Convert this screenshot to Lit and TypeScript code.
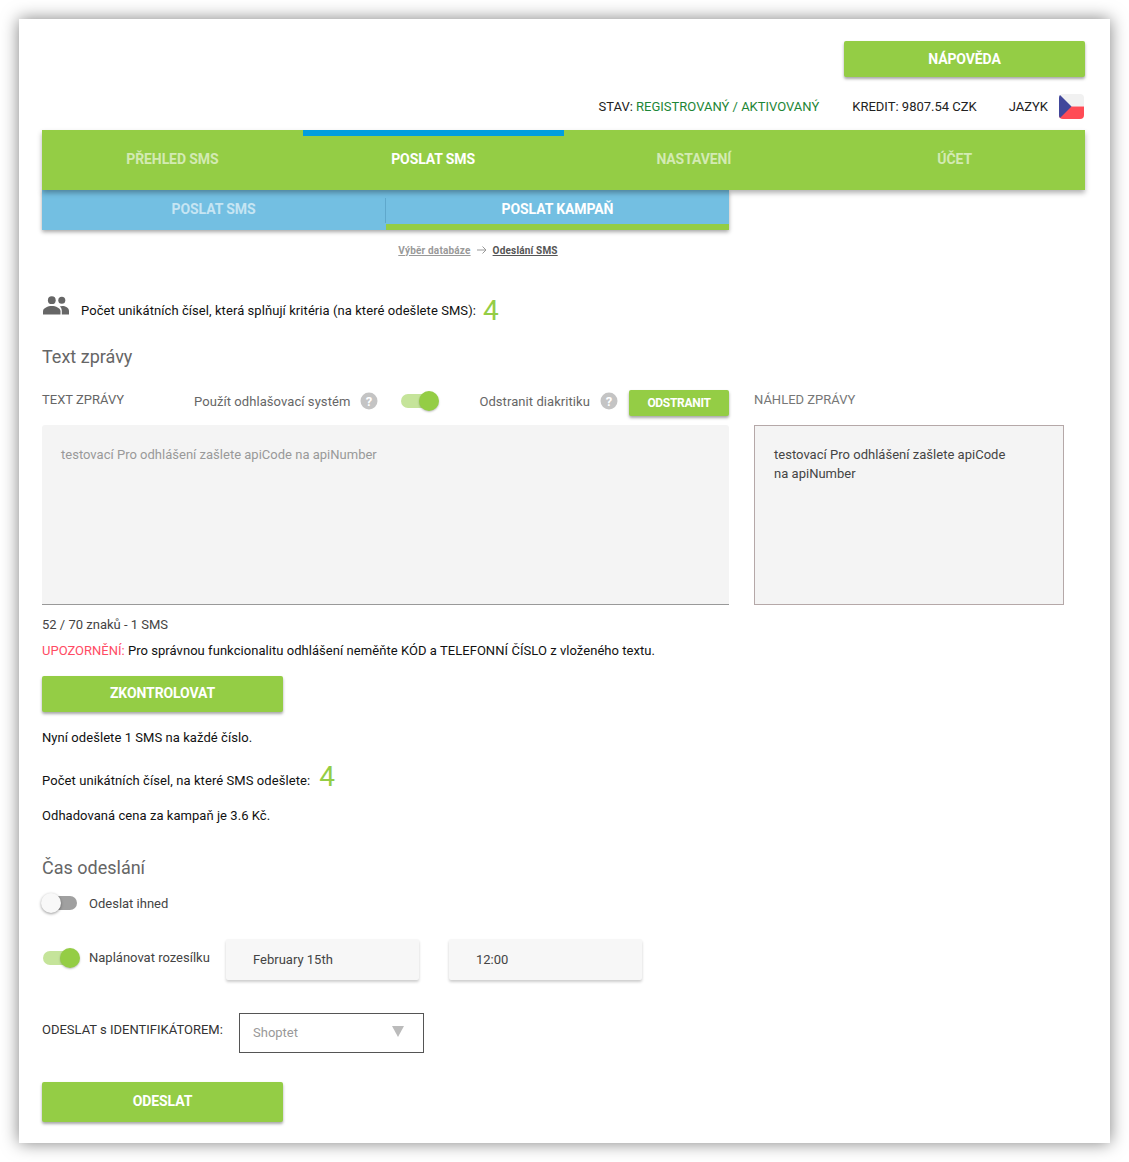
import { LitElement, html, css } from "lit";
import { customElement } from "lit/decorators.js";

const help = html`<svg class="help" viewBox="0 0 18 18" width="18" height="18"><circle cx="9" cy="9" r="8.5" fill="#c4c4c4"/><text x="9" y="13.6" text-anchor="middle" font-family="Roboto" font-weight="700" font-size="13" fill="#fff">?</text></svg>`;

@customElement("app-root")
export class AppRoot extends LitElement {
  static styles = css`
    :host { display: block; font-family: Roboto, "Liberation Sans", sans-serif; font-size: 13px; color: #222; background: #fff; }
    * { box-sizing: border-box; }
    .page { padding: 19px; height: 1162px; }
    .card { width: 1091px; height: 1124px; background: #fff; box-shadow: 0 0 16px rgba(0,0,0,.5); padding: 22px 25px 0 23px; }
    .btn { display: flex; align-items: center; justify-content: center; background: #94cd45; color: #fff; font-weight: 700; border-radius: 2px; box-shadow: 0 2px 3px rgba(0,0,0,.35); font-size: 14px; letter-spacing: -.1px; }
    .top { display: flex; justify-content: flex-end; }
    .help-btn { width: 241px; height: 36px; padding-bottom: 1px; }
    .status { display: flex; justify-content: flex-end; align-items: center; height: 25px; margin-top: 17px; margin-bottom: 11px; color: #222; font-size: 13px; }
    .status .reg { color: #1d8636; }
    .status .s { margin-right: 33px; }
    .status .k { margin-right: 32px; }
    .flag { margin-left: 11px; margin-right: 1px; width: 25px; height: 25px; border-radius: 4px; display: block; }
    .nav { display: grid; grid-template-columns: repeat(4, 1fr); height: 60px; background: #94cd45; box-shadow: 0 3px 5px rgba(0,0,0,.3); position: relative; z-index: 2; }
    .nav div { display: flex; align-items: center; justify-content: center; color: rgba(255,255,255,.6); font-weight: 700; font-size: 14px; letter-spacing: -.1px; border-top: 6px solid transparent; padding-bottom: 8px; }
    .nav div.on { color: #fff; border-top-color: #009ee0; }
    .sub { display: grid; grid-template-columns: 343px 1px 343px; width: 687px; height: 40px; background: #73bfe2; box-shadow: 0 2px 4px rgba(0,0,0,.35); }
    .sub .t { display: flex; align-items: center; justify-content: center; color: rgba(255,255,255,.6); font-weight: 700; font-size: 14px; letter-spacing: -.1px; border-bottom: 6px solid transparent; padding-top: 4px; }
    .sub .t.on { color: #fff; border-bottom-color: #94cd45; }
    .sep { background: #5fa8cc; margin: 8px 0 7px; }
    .crumb { width: 872px; margin-top: 13px; height: 14px; display: flex; justify-content: center; align-items: center; gap: 6px; font-size: 10px; font-weight: 700; color: #999; letter-spacing: .18px; }
    .crumb u:last-child { color: #555; }
    .count { display: flex; align-items: flex-start; margin-top: 39px; height: 38px; }
    .count svg { margin-left: 1px; display: block; }
    .count .lbl { margin-left: 12px; margin-top: 7px; color: #111; letter-spacing: .07px; }
    .big { color: #94cd45; font-size: 28px; font-weight: 400; line-height: 30px; margin-left: 7px; }
    h2 { margin: 0; font-weight: 400; font-size: 18px; color: #666; line-height: 24px; }
    .t1 { margin-top: 11px; }
    .cols { display: grid; grid-template-columns: 687px 310px; gap: 25px; margin-top: 21px; }
    .ctrl { display: flex; align-items: center; height: 26px; padding-bottom: 4px; color: #666; letter-spacing: .07px; }
    .ctrl .l { width: 152px; font-size: 13px; letter-spacing: 0; margin-top: -4px; }
    .help { display: block; }
    .mh { margin-left: 10px; }
    .sw { width: 38px; height: 20px; position: relative; flex: none; }
    .sw::before { content: ""; position: absolute; left: 0; right: 2px; top: 3px; height: 14px; border-radius: 7px; background: #c5e49a; }
    .sw::after { content: ""; position: absolute; right: 0; top: 0; width: 20px; height: 20px; border-radius: 50%; background: #94cd45; box-shadow: 0 1px 2px rgba(0,0,0,.25); }
    .sw.off::before { background: #a0a0a0; left: 2px; right: 0; }
    .sw.off::after { left: 0; right: auto; background: #f8f8f8; box-shadow: 0 1px 3px rgba(0,0,0,.4); }
    .sw1 { margin-left: 23px; }
    .od { margin-left: 40px; }
    .rm { width: 100px; height: 26px; font-size: 12px; margin-left: auto; letter-spacing: -.3px; align-self: flex-start; flex: none; }
    .ta { margin-top: 9px; height: 180px; background: #f4f4f4; border-bottom: 1px solid #999; border-radius: 3px 3px 0 0; padding: 21px 19px; color: #999; line-height: 18px; letter-spacing: .01px; }
    .pl { color: #777; font-size: 13px; height: 26px; line-height: 14px; padding-top: 3px; }
    .pv { margin-top: 9px; height: 180px; background: #f4f4f4; border: 1px solid #b5a8a8; padding: 19px; color: #444; line-height: 19px; letter-spacing: .02px; }
    .line { line-height: 16px; }
    .cnt { margin-top: 12px; color: #444; }
    .warn { margin-top: 10px; color: #111; letter-spacing: .05px; }
    .warn b { font-weight: 400; color: #ff4b64; letter-spacing: 0; }
    .chk { width: 241px; height: 36px; margin-top: 17px; padding-bottom: 2px; }
    .now { margin-top: 18px; color: #111; letter-spacing: .06px; }
    .uniq { display: flex; align-items: flex-end; margin-top: 11px; height: 34px; }
    .uniq .lbl { line-height: 16px; margin-bottom: 2px; color: #111; letter-spacing: .08px; }
    .uniq .big { margin-left: 9px; margin-bottom: -1px; }
    .est { margin-top: 17px; color: #111; letter-spacing: .05px; }
    .t2 { margin-top: 32px; }
    .opt { display: flex; align-items: center; color: #444; }
    .o1 { margin-top: 11px; height: 24px; margin-left: -1px; }
    .o1 .sw { width: 36px; }
    .o1 span:last-child { margin-left: 12px; }
    .o2 { margin-top: 24px; height: 41px; margin-left: 1px; }
    .o2 .sw { width: 37px; margin-top: -3px; }
    .o2 span:nth-child(2) { margin-left: 9px; margin-top: -4px; width: 122px; flex: none; }
    .fld { width: 193px; height: 41px; background: #f7f7f7; box-shadow: 0 2px 3px rgba(0,0,0,.2); display: flex; align-items: center; padding-left: 27px; margin-left: 15px; color: #444; border-radius: 2px; }
    .fld + .fld { margin-left: 30px; }
    .sel-row { display: flex; align-items: flex-start; margin-top: 33px; height: 40px; }
    .sel-row .lbl { width: 197px; padding-top: 9px; font-size: 13px; line-height: 16px; color: #333; }
    .sel { width: 185px; height: 40px; border: 1px solid #555; display: flex; align-items: center; justify-content: space-between; padding: 0 19px 1px 13px; color: #999; }
    .tri { width: 0; height: 0; border-left: 6px solid transparent; border-right: 6px solid transparent; border-top: 11px solid #bbb; margin-top: -2px; }
    .send { width: 241px; height: 40px; margin-top: 29px; padding-bottom: 3px; }
  `;

  render() {
    return html`<div class="page"><div class="card">
      <div class="top"><div class="btn help-btn">NÁPOVĚDA</div></div>
      <div class="status">
        <span class="s">STAV: <span class="reg">REGISTROVANÝ / AKTIVOVANÝ</span></span>
        <span class="k">KREDIT: 9807.54 CZK</span>
        <span>JAZYK</span>
        <svg class="flag" viewBox="0 0 25 25"><rect width="25" height="12.5" fill="#f1f1f1"/><rect y="12.5" width="25" height="12.5" fill="#ff4b55"/><path d="M0 0 L12.5 12.5 L0 25Z" fill="#41479b"/></svg>
      </div>
      <div class="nav"><div>PŘEHLED SMS</div><div class="on">POSLAT SMS</div><div>NASTAVENÍ</div><div>ÚČET</div></div>
      <div class="sub"><div class="t">POSLAT SMS</div><div class="sep"></div><div class="t on">POSLAT KAMPAŇ</div></div>
      <div class="crumb"><u>Výběr databáze</u>
        <svg width="10" height="10" viewBox="0 0 10 10"><path d="M0 5H9M5.500 1.500L9 5L5.500 8.500" fill="none" stroke="#999" stroke-width="1"/></svg>
        <u>Odeslání SMS</u></div>
      <div class="count">
        <svg width="26" height="19" viewBox="0 0 26 19"><circle cx="8.800" cy="4.200" r="3.900" fill="#666"/><circle cx="18.800" cy="4.200" r="3.500" fill="#666"/><path d="M0 18.500V15.200C0 12 5 10 8.800 10S17.500 12 17.500 15.200V18.500Z" fill="#666"/><path d="M18.800 18.500V15C18.800 13 18 11.600 16.800 10.600 17.600 10.200 18.400 10 19.200 10 22.400 10 26 11.800 26 15V18.500Z" fill="#666"/></svg>
        <span class="lbl">Počet unikátních čísel, která splňují kritéria (na které odešlete SMS):</span>
        <span class="big">4</span>
      </div>
      <h2 class="t1">Text zprávy</h2>
      <div class="cols">
        <div>
          <div class="ctrl">
            <span class="l">TEXT ZPRÁVY</span>
            <span>Použít odhlašovací systém</span><span class="mh">${help}</span>
            <span class="sw sw1"></span>
            <span class="od">Odstranit diakritiku</span><span class="mh">${help}</span>
            <div class="btn rm">ODSTRANIT</div>
          </div>
          <div class="ta">testovací Pro odhlášení zašlete apiCode na apiNumber</div>
        </div>
        <div>
          <div class="pl">NÁHLED ZPRÁVY</div>
          <div class="pv">testovací Pro odhlášení zašlete apiCode<br>na apiNumber</div>
        </div>
      </div>
      <div class="line cnt">52 / 70 znaků - 1 SMS</div>
      <div class="line warn"><b>UPOZORNĚNÍ:</b> Pro správnou funkcionalitu odhlášení neměňte KÓD a TELEFONNÍ ČÍSLO z vloženého textu.</div>
      <div class="btn chk">ZKONTROLOVAT</div>
      <div class="line now">Nyní odešlete 1 SMS na každé číslo.</div>
      <div class="uniq"><span class="lbl">Počet unikátních čísel, na které SMS odešlete:</span><span class="big">4</span></div>
      <div class="line est">Odhadovaná cena za kampaň je 3.6 Kč.</div>
      <h2 class="t2">Čas odeslání</h2>
      <div class="opt o1"><span class="sw off"></span><span>Odeslat ihned</span></div>
      <div class="opt o2"><span class="sw"></span><span>Naplánovat rozesílku</span>
        <div class="fld">February 15th</div><div class="fld">12:00</div></div>
      <div class="sel-row"><span class="lbl">ODESLAT s IDENTIFIKÁTOREM:</span>
        <div class="sel"><span>Shoptet</span><span class="tri"></span></div></div>
      <div class="btn send">ODESLAT</div>
    </div></div>`;
  }
}
